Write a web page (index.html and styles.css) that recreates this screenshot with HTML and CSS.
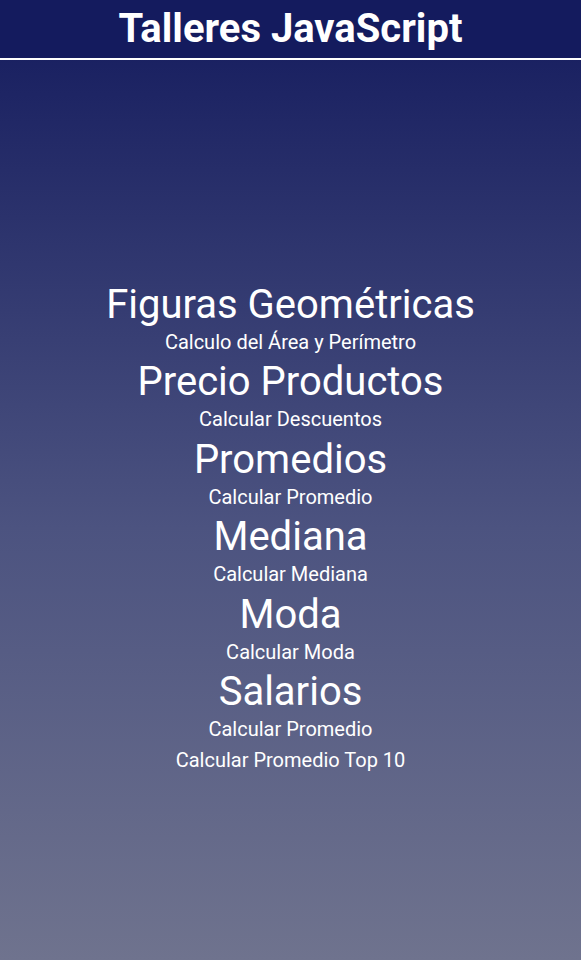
FILE: index.html
```html
<!DOCTYPE html>
<html lang="es">
<head>
<meta charset="utf-8">
<title>Talleres JavaScript</title>
<link rel="stylesheet" href="styles.css">
</head>
<body>
<header class="top">
  <h1 class="title">Talleres JavaScript</h1>
</header>
<main class="list">
  <section class="item">
    <h2 class="item-title">Figuras Geométricas</h2>
    <a class="item-link" href="#">Calculo del Área y Perímetro</a>
  </section>
  <section class="item">
    <h2 class="item-title">Precio Productos</h2>
    <a class="item-link" href="#">Calcular Descuentos</a>
  </section>
  <section class="item">
    <h2 class="item-title">Promedios</h2>
    <a class="item-link" href="#">Calcular Promedio</a>
  </section>
  <section class="item">
    <h2 class="item-title">Mediana</h2>
    <a class="item-link" href="#">Calcular Mediana</a>
  </section>
  <section class="item">
    <h2 class="item-title">Moda</h2>
    <a class="item-link" href="#">Calcular Moda</a>
  </section>
  <section class="item">
    <h2 class="item-title">Salarios</h2>
    <a class="item-link" href="#">Calcular Promedio</a>
    <a class="item-link" href="#">Calcular Promedio Top 10</a>
  </section>
</main>
</body>
</html>
```
FILE: styles.css
```css
* { box-sizing: border-box; }
html, body { margin: 0; padding: 0; }
body {
  min-height: 960px;
  font-family: Roboto, "Liberation Sans", sans-serif;
  color: #ffffff;
  background: linear-gradient(to bottom, #141b5e 0%, #4c5380 55%, #6f738e 100%);
  display: flex;
  flex-direction: column;
}
.top {
  height: 60px;
  border-bottom: 2px solid #ffffff;
  background: #141b5e;
  display: flex;
  justify-content: center;
  align-items: center;
}
.title {
  margin: 0;
  font-size: 40px;
  font-weight: 700;
  line-height: 1;
}
.list {
  flex: 1;
  display: flex;
  flex-direction: column;
  justify-content: center;
  align-items: center;
  padding-top: 36px;
}
.item {
  display: flex;
  flex-direction: column;
  align-items: center;
}
.item-title {
  margin: 0;
  padding-top: 2.5px;
  font-size: 40px;
  font-weight: 400;
  line-height: 44px;
}
.item-link {
  color: #ffffff;
  text-decoration: none;
  font-size: 20px;
  line-height: 31px;
}
```
